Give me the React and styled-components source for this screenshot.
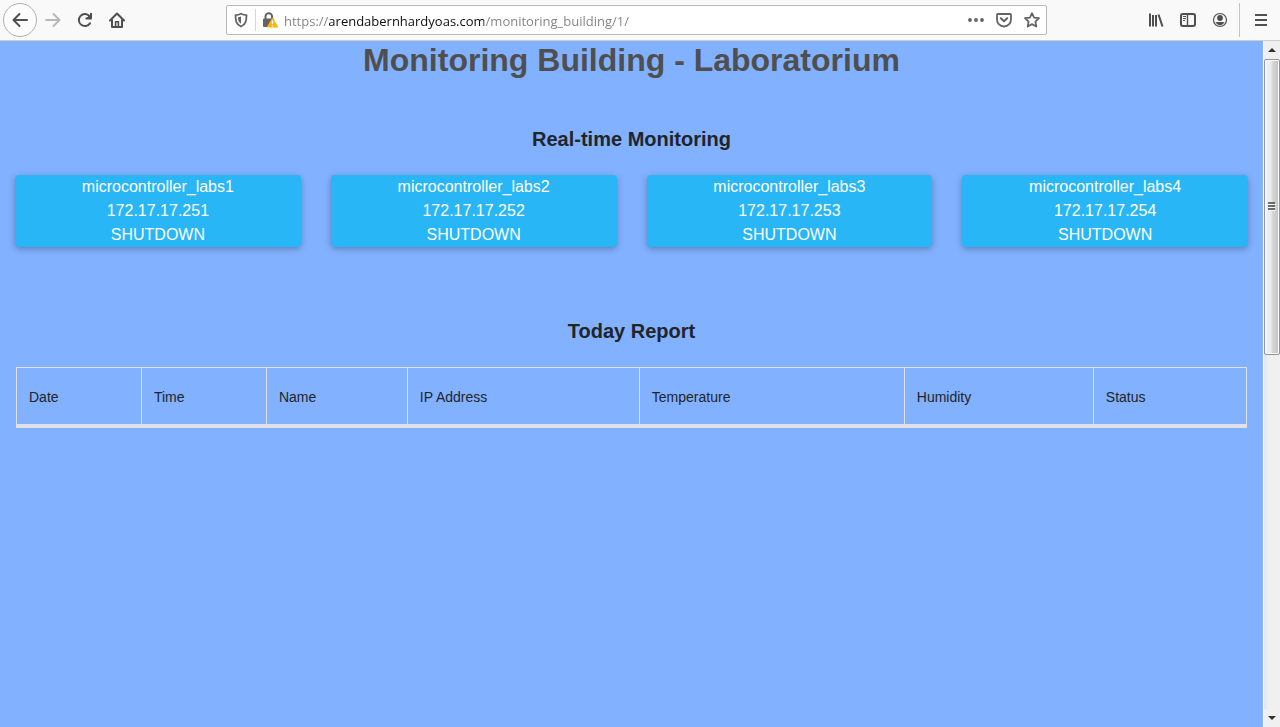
import React from "react";
import styled, { createGlobalStyle } from "styled-components";

const GlobalStyle = createGlobalStyle`
  *, *::before, *::after { box-sizing: border-box; }
  body {
    margin: 0;
    font-family: "Liberation Sans", Arial, sans-serif;
    font-size: 16px;
    line-height: 24px;
    color: #212529;
    background: #82b1ff;
  }
`;

const Window = styled.div`
  display: flex;
  flex-direction: column;
  min-height: 100vh;
`;

const Toolbar = styled.header`
  display: flex;
  align-items: center;
  height: 41px;
  padding: 0 3px;
  background: #f9f9fa;
  border-bottom: 1px solid #cccccc;
`;

const NavGroup = styled.nav`
  display: flex;
  align-items: center;
`;

const IconButton = styled.button`
  display: flex;
  align-items: center;
  justify-content: center;
  width: ${(p) => p.$width || 32}px;
  height: 32px;
  padding: 0;
  border: 0;
  background: none;
  color: ${(p) => (p.disabled ? "#b8b8b9" : "#4f4f50")};
`;

const BackButton = styled(IconButton)`
  width: 34px;
  height: 34px;
  border: 1px solid #b1b1b1;
  border-radius: 50%;
  background: #fcfcfc;
`;

const AddressBar = styled.div`
  flex: 1;
  display: flex;
  align-items: center;
  height: 30px;
  min-width: 0;
  margin: 0 93px;
  background: #ffffff;
  border: 1px solid #b9b9b9;
  border-radius: 2px;
`;

const BarButton = styled(IconButton)`
  width: 28px;
  height: 28px;
  color: #636364;
`;

const BarDivider = styled.span`
  width: 1px;
  height: 22px;
  background: #d7d7db;
`;

const AddressInput = styled.input`
  flex: 1;
  min-width: 0;
  height: 28px;
  padding: 2px 0 0;
  border: 0;
  outline: 0;
  font-family: "Open Sans", "Noto Sans", sans-serif;
  font-size: 13px;
  color: #0c0c0d;
  background: linear-gradient(to right, #808080 45px, #0c0c0d 45px 200px, #808080 200px);
  -webkit-background-clip: text;
  background-clip: text;
  -webkit-text-fill-color: transparent;
`;

const MenuDivider = styled.span`
  width: 1px;
  height: 34px;
  margin: 0 5px 0 3px;
  background: #c4c4c5;
`;

const Viewport = styled.div`
  flex: 1;
  display: flex;
`;

const Page = styled.main`
  flex: 1;
  min-width: 0;
  padding: 0 15px;
`;

const Title = styled.h1`
  margin: 0 0 48px;
  font-size: 32px;
  line-height: 38px;
  text-align: center;
  color: #4f4f4f;
`;

const Section = styled.section`
  margin-bottom: 72px;
`;

const SectionTitle = styled.h2`
  margin: 0 0 24px;
  font-size: 20px;
  line-height: 24px;
  text-align: center;
`;

const CardGrid = styled.div`
  display: grid;
  grid-template-columns: repeat(4, minmax(0, 1fr));
  gap: 30px;
`;

const Card = styled.article`
  border-radius: 4px;
  background: #29b6f6;
  color: #ffffff;
  text-align: center;
  box-shadow: 0 2px 5px rgba(0, 0, 0, 0.16), 0 2px 10px rgba(0, 0, 0, 0.12);
`;

const CardLine = styled.p`
  margin: 0;
`;

const ReportFrame = styled.div`
  padding: 0 1px;
`;

const ReportTable = styled.table`
  width: 100%;
  table-layout: fixed;
  border-spacing: 0;
  border-left: 1px solid #dee2e6;
  font-size: 14px;
`;

const HeadCell = styled.th`
  width: ${(p) => p.$share}%;
  height: 61px;
  padding: 2px 12px 0;
  border: solid #dee2e6;
  border-width: 1px 1px 4px 0;
  font-weight: 400;
  text-align: left;
`;

const Scrollbar = styled.aside`
  display: flex;
  flex-direction: column;
  width: 17px;
  border-left: 1px solid #ffffff;
  background: linear-gradient(to right, #e5e5e5, #f0f0f0 5px, #efefef);
`;

const ScrollButton = styled.button`
  display: flex;
  align-items: center;
  justify-content: center;
  height: 18px;
  padding: 0;
  border: 0;
  background: #f0f0f0;
`;

const ScrollTrack = styled.div`
  flex: 1;
  display: flex;
  flex-direction: column;
`;

const ScrollThumb = styled.div`
  flex: 0 0 45.5%;
  display: flex;
  align-items: center;
  justify-content: center;
  border: 1px solid #959595;
  border-radius: 2px;
  box-shadow: inset 0 0 0 1px #fafafa;
  background: linear-gradient(to right, #f5f5f5, #e8e8ea 45%, #d6d6d8 55%, #c2c2c6);
`;

const Icon = ({ size = 16, children }) => (
  <svg
    width={size}
    height={size}
    viewBox="0 0 16 16"
    fill="none"
    stroke="currentColor"
    strokeWidth="2"
    strokeLinecap="round"
    strokeLinejoin="round"
    aria-hidden="true"
  >
    {children}
  </svg>
);

const BackIcon = () => (
  <Icon><path d="M15 8H1.500M7.500 2 1.500 8l6 6" /></Icon>
);
const ForwardIcon = () => (
  <Icon><path d="M1 8h13.500M8.500 2l6 6-6 6" /></Icon>
);
const ReloadIcon = () => (
  <Icon>
    <path d="M13 11.200A6 6 0 1 1 12.500 4.200" />
    <path d="M14 1.800V6.500H9.300" />
    <path d="M13.500 3v3h-3z" fill="currentColor" strokeWidth="1" />
  </Icon>
);
const HomeIcon = () => (
  <Icon>
    <path d="M1 8.500 8 1.500l7 7M3 8v7h10V8" />
    <path d="M6.600 15v-5.200h2.800V15" strokeWidth="1.600" />
  </Icon>
);
const ShieldIcon = () => (
  <Icon>
    <path d="M8 1.800c-1.700.9-3.700 1.300-5.500 1.300 0 5.500.6 9.400 5.500 11.400 4.900-2 5.500-5.900 5.500-11.400C11.700 3.100 9.700 2.700 8 1.800z" strokeWidth="1.800" />
    <path d="M8 4.500c-1 .5-2 .7-3 .8.100 3.300.5 5 3 6.500z" fill="currentColor" stroke="none" />
  </Icon>
);
const LockWarningIcon = () => (
  <Icon>
    <path d="M3.500 7V4.500a3.300 3.300 0 0 1 6.600 0V7" />
    <rect x="1" y="6.500" width="11" height="8.500" rx="1" fill="currentColor" stroke="none" />
    <path d="M10.500 6.500 15.500 15h-10z" fill="#ffb300" stroke="#ffb300" strokeWidth="1.200" />
    <path d="M10.500 9v2.500M10.500 13.800v.1" stroke="#fff" strokeWidth="1.400" />
  </Icon>
);
const MoreIcon = () => (
  <Icon>
    <g fill="currentColor" stroke="none">
      <circle cx="2" cy="8" r="1.900" />
      <circle cx="8" cy="8" r="1.900" />
      <circle cx="14" cy="8" r="1.900" />
    </g>
  </Icon>
);
const PocketIcon = () => (
  <Icon>
    <path d="M2 2h12a1 1 0 0 1 1 1v4.500a7 7 0 0 1-14 0V3a1 1 0 0 1 1-1z" strokeWidth="1.800" />
    <path d="m4.800 6.300 3.200 3 3.200-3" />
  </Icon>
);
const StarIcon = () => (
  <Icon>
    <path d="m8 1.200 2.100 4.400 4.900.6-3.600 3.400.9 4.900L8 12.100l-4.300 2.400.9-4.900L1 6.200l4.900-.6z" strokeWidth="1.800" />
  </Icon>
);
const LibraryIcon = () => (
  <Icon>
    <path d="M2 1.500v13M5 3v11.500M8 3v11.500M10.500 2.500l4 12" strokeLinecap="butt" />
  </Icon>
);
const SidebarIcon = () => (
  <Icon>
    <rect x="1" y="2" width="14" height="12" rx="2" />
    <path d="M7.500 2v12" strokeWidth="1.400" />
    <path d="M3 4.500h3M3 6.500h3M3 8.500h2" strokeWidth="1" strokeLinecap="butt" />
  </Icon>
);
const AccountIcon = () => (
  <Icon>
    <circle cx="8" cy="8" r="6.500" strokeWidth="1.200" />
    <circle cx="8" cy="6" r="2.900" fill="currentColor" stroke="none" />
    <path d="M3.500 10c1.200.3 2.500 0 3 0h3c.5 0 1.800.3 3 0-.7 2-2.500 3.200-4.500 3.200S4.200 12 3.500 10z" fill="currentColor" stroke="none" />
  </Icon>
);
const MenuIcon = () => (
  <Icon>
    <path d="M2 3h12M2 8h12M2 13h12" strokeLinecap="butt" />
  </Icon>
);

const Arrow = ({ down }) => (
  <svg width="8" height="4" viewBox="0 0 8 4" aria-hidden="true">
    <path d={down ? "M0 0h8L4 4z" : "M0 4h8L4 0z"} fill="#333" />
  </svg>
);

const Grip = () => (
  <svg width="8" height="9" viewBox="0 0 8 9" aria-hidden="true">
    <path d="M0 1h7M0 4h7M0 7h7" stroke="#444" strokeWidth="1.500" />
    <path d="M1 2.500h7M1 5.500h7M1 8.500h7" stroke="#fff" opacity=".7" />
  </svg>
);

const devices = [
  { name: "microcontroller_labs1", ip: "172.17.17.251", status: "SHUTDOWN" },
  { name: "microcontroller_labs2", ip: "172.17.17.252", status: "SHUTDOWN" },
  { name: "microcontroller_labs3", ip: "172.17.17.253", status: "SHUTDOWN" },
  { name: "microcontroller_labs4", ip: "172.17.17.254", status: "SHUTDOWN" },
];

const columns = [
  { label: "Date", share: 10.16 },
  { label: "Time", share: 10.16 },
  { label: "Name", share: 11.46 },
  { label: "IP Address", share: 18.86 },
  { label: "Temperature", share: 21.54 },
  { label: "Humidity", share: 15.37 },
  { label: "Status", share: 12.45 },
];

export default function App() {
  return (
    <>
      <GlobalStyle />
      <Window>
        <Toolbar>
          <NavGroup aria-label="Browser navigation">
            <BackButton aria-label="Back"><BackIcon /></BackButton>
            <IconButton aria-label="Forward" disabled><ForwardIcon /></IconButton>
            <IconButton aria-label="Reload"><ReloadIcon /></IconButton>
            <IconButton aria-label="Home"><HomeIcon /></IconButton>
          </NavGroup>
          <AddressBar>
            <BarButton aria-label="Tracking protection"><ShieldIcon /></BarButton>
            <BarDivider />
            <BarButton aria-label="Connection security"><LockWarningIcon /></BarButton>
            <AddressInput
              aria-label="Address"
              spellCheck={false}
              defaultValue="https://arendabernhardyoas.com/monitoring_building/1/"
            />
            <BarButton aria-label="Page actions"><MoreIcon /></BarButton>
            <BarButton aria-label="Save to Pocket"><PocketIcon /></BarButton>
            <BarButton aria-label="Bookmark"><StarIcon /></BarButton>
          </AddressBar>
          <NavGroup aria-label="Browser tools">
            <IconButton aria-label="Library"><LibraryIcon /></IconButton>
            <IconButton aria-label="Sidebars"><SidebarIcon /></IconButton>
            <IconButton aria-label="Account"><AccountIcon /></IconButton>
            <MenuDivider />
            <IconButton aria-label="Menu"><MenuIcon /></IconButton>
          </NavGroup>
        </Toolbar>
        <Viewport>
          <Page>
            <Title>Monitoring Building - Laboratorium</Title>
            <Section>
              <SectionTitle>Real-time Monitoring</SectionTitle>
              <CardGrid>
                {devices.map((d) => (
                  <Card key={d.name}>
                    <CardLine>{d.name}</CardLine>
                    <CardLine>{d.ip}</CardLine>
                    <CardLine>{d.status}</CardLine>
                  </Card>
                ))}
              </CardGrid>
            </Section>
            <Section>
              <SectionTitle>Today Report</SectionTitle>
              <ReportFrame>
                <ReportTable>
                  <thead>
                    <tr>
                      {columns.map((c) => (
                        <HeadCell key={c.label} scope="col" $share={c.share}>{c.label}</HeadCell>
                      ))}
                    </tr>
                  </thead>
                </ReportTable>
              </ReportFrame>
            </Section>
          </Page>
          <Scrollbar aria-label="Page scroll">
            <ScrollButton aria-label="Scroll up"><Arrow /></ScrollButton>
            <ScrollTrack>
              <ScrollThumb><Grip /></ScrollThumb>
            </ScrollTrack>
            <ScrollButton aria-label="Scroll down"><Arrow down /></ScrollButton>
          </Scrollbar>
        </Viewport>
      </Window>
    </>
  );
}
